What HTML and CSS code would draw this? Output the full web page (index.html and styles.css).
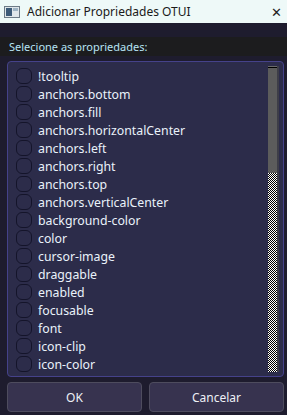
FILE: index.html
```html
<!DOCTYPE html>
<html lang="pt">
<head>
    <meta charset="UTF-8">
    <title>Adicionar Propriedades OTUI</title>
    <link rel="stylesheet" href="styles.css">
</head>
<body>

    <div class="titlebar">
        <svg class="app-icon" width="16" height="12" viewBox="0 0 16 12">
            <rect x="0.5" y="0.5" width="15" height="11" fill="#dfe6ea" stroke="#6c7a86"/>
            <rect x="2" y="2" width="6" height="8" fill="#3c5a78"/>
            <rect x="9" y="2" width="5" height="3" fill="#9fb4c4"/>
        </svg>
        <span class="title">Adicionar Propriedades OTUI</span>
        <span class="close">&#x2715;</span>
    </div>

    <div class="dialog">
        <div class="label-row">Selecione as propriedades:</div>

        <div class="list">
            <ul class="items">
                <li><span class="check"></span>!tooltip</li>
                <li><span class="check"></span>anchors.bottom</li>
                <li><span class="check"></span>anchors.fill</li>
                <li><span class="check"></span>anchors.horizontalCenter</li>
                <li><span class="check"></span>anchors.left</li>
                <li><span class="check"></span>anchors.right</li>
                <li><span class="check"></span>anchors.top</li>
                <li><span class="check"></span>anchors.verticalCenter</li>
                <li><span class="check"></span>background-color</li>
                <li><span class="check"></span>color</li>
                <li><span class="check"></span>cursor-image</li>
                <li><span class="check"></span>draggable</li>
                <li><span class="check"></span>enabled</li>
                <li><span class="check"></span>focusable</li>
                <li><span class="check"></span>font</li>
                <li><span class="check"></span>icon-clip</li>
                <li><span class="check"></span>icon-color</li>
            </ul>
            <div class="scrollbar">
                <div class="handle"></div>
                <svg class="track" width="9" height="200" shape-rendering="crispEdges">
                    <defs>
                        <pattern id="dither" width="2" height="2" patternUnits="userSpaceOnUse">
                            <rect width="2" height="2" fill="#000"/>
                            <rect width="1" height="1" fill="#fff"/>
                            <rect x="1" y="1" width="1" height="1" fill="#fff"/>
                        </pattern>
                    </defs>
                    <rect width="9" height="200" fill="url(#dither)"/>
                </svg>
            </div>
        </div>

        <div class="buttons">
            <button>OK</button>
            <button>Cancelar</button>
        </div>
    </div>

</body>
</html>
```

FILE: styles.css
```css
body {
    margin: 0;
    width: 287px;
    height: 415px;
    overflow: hidden;
    background: #1e1c2e;
    font-family: "Noto Sans", "Open Sans", sans-serif;
}
.titlebar {
    height: 23px;
    background: #eef9f8;
    display: flex;
    align-items: center;
    padding: 0 4px 0 4px;
    color: #1a1a1a;
    font-size: 12px;
}
.app-icon {
    margin-right: 7px;
}
.title {
    flex: 1;
}
.close {
    font-size: 13px;
    color: #222;
    margin-right: 1px;
}
.dialog {
    padding: 14px 3px 0 7px;
}
.label-row {
    height: 19px;
    margin-left: -7px;
    margin-right: -3px;
    padding-left: 9px;
    background: #1c1c1e;
    color: #b8e4f4;
    font-size: 11px;
    line-height: 19px;
}
.list {
    margin-top: 5px;
    height: 314px;
    border: 1px solid #45428a;
    border-radius: 4px;
    background: #2c2c4a;
    display: flex;
    overflow: hidden;
}
.items {
    list-style: none;
    margin: 0;
    padding: 5px 0 0 8px;
    flex: 1;
}
.items li {
    height: 18px;
    display: flex;
    align-items: center;
    color: #eaf2fa;
    font-size: 12.3px;
}
.check {
    width: 14px;
    height: 14px;
    border: 1px solid #14142a;
    border-radius: 6px;
    margin-right: 6px;
}
.scrollbar {
    width: 9px;
    margin: 4px 4px 4px 0;
    display: flex;
    flex-direction: column;
    border-right: 2px solid #3e3e48;
}
.handle {
    height: 106px;
    background: #5c5c5c;
    border-top: 1px solid #6a6a6a;
    box-shadow: inset -1px 12px 0 -11px #000;
}
.track {
    display: block;
    flex: 1;
}
.buttons {
    display: flex;
    gap: 7px;
    margin-top: 5px;
}
.buttons button {
    flex: 1;
    height: 30px;
    background: #37334f;
    border: 1px solid #4e4c5e;
    border-radius: 4px;
    color: #eef0f6;
    font-family: "Noto Sans", "Open Sans", sans-serif;
    font-size: 12px;
}
```
